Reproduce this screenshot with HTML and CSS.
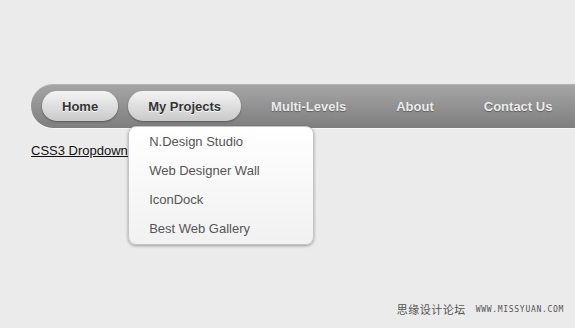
FILE: index.html
```html
<!DOCTYPE html>
<html lang="en">
    <head>
        <meta charset="UTF-8">
        <meta name="viewport" content="width=device-width, initial-scale=1.0">
        <title>CSS3 Dropdown Menu</title>
        <link rel="stylesheet" href="styles.css">
    </head>
    <body>
        <div id="page">
            <ul id="nav">
                <li class="item"><a class="pill" href="#">Home</a></li>
                <li class="item">
                    <a class="pill" href="#">My Projects</a>
                    <ul class="dropdown">
                        <li><a href="#">N.Design Studio</a></li>
                        <li><a href="#">Web Designer Wall</a></li>
                        <li><a href="#">IconDock</a></li>
                        <li><a href="#">Best Web Gallery</a></li>
                    </ul>
                </li>
                <li class="item"><a class="link" href="#">Multi-Levels</a></li>
                <li class="item"><a class="link" href="#">About</a></li>
                <li class="item"><a class="link" href="#">Contact Us</a></li>
            </ul>
            <p class="back"><a href="#">CSS3 Dropdown Menu</a></p>
        </div>
        <div class="watermark">
            <span class="cn">思缘设计论坛</span>
            <span class="url">WWW.MISSYUAN.COM</span>
        </div>
    </body>
</html>
```

FILE: styles.css
```css
body {
    margin: 0;
    padding: 0;
    height: 328px;
    overflow: hidden;
    background-color: #ebebeb;
    font-family: "Liberation Sans", Arial, sans-serif;
    font-size: 13px;
    color: #222;
}
#page {
    padding: 84px 0 0 31px;
}
#nav {
    list-style: none;
    margin: 0;
    padding: 0 0 0 11px;
    height: 44px;
    display: flex;
    align-items: center;
    gap: 10px;
    border-radius: 22px 0 0 22px;
    background: linear-gradient(to bottom, #a6a6a6, #7e7e7e);
    box-shadow: inset 0 1px 0 rgba(255, 255, 255, 0.15), 0 1px 1px rgba(255, 255, 255, 0.6);
}
.item {
    position: relative;
}
.item > a {
    display: block;
    height: 30px;
    line-height: 31px;
    padding: 0 20px;
    font-weight: bold;
    text-decoration: none;
}
.pill {
    color: #333;
    border-radius: 15px;
    background: linear-gradient(to bottom, #f4f4f4, #c9c9c9);
    text-shadow: 0 1px 0 #fff;
    box-shadow: 0 1px 2px rgba(0, 0, 0, 0.35);
}
.link {
    color: #ececec;
    text-shadow: 0 1px 1px rgba(0, 0, 0, 0.35);
}
.dropdown {
    position: absolute;
    top: 35px;
    left: 0;
    width: 184px;
    margin: 0;
    padding: 0;
    list-style: none;
    border: 1px solid #c4c4c4;
    border-radius: 8px;
    background: linear-gradient(to bottom, #ffffff, #f1f1f1);
    box-shadow: 0 1px 3px rgba(0, 0, 0, 0.35);
    z-index: 2;
}
.dropdown a {
    display: block;
    height: 29px;
    line-height: 29px;
    padding-left: 20px;
    color: #555;
    text-decoration: none;
}
.dropdown li:last-child a {
    height: 30px;
}
.back {
    margin: 15px 0 0;
}
.back a {
    color: #111;
}
.watermark {
    position: absolute;
    right: 11px;
    bottom: 11px;
    display: flex;
    align-items: center;
    gap: 10px;
    color: #555;
}
.cn {
    font-family: "Noto Sans CJK SC", sans-serif;
    font-size: 11px;
    letter-spacing: 0.5px;
}
.url {
    font-family: "DejaVu Sans Mono", monospace;
    font-size: 8px;
    letter-spacing: 0.7px;
}
```
